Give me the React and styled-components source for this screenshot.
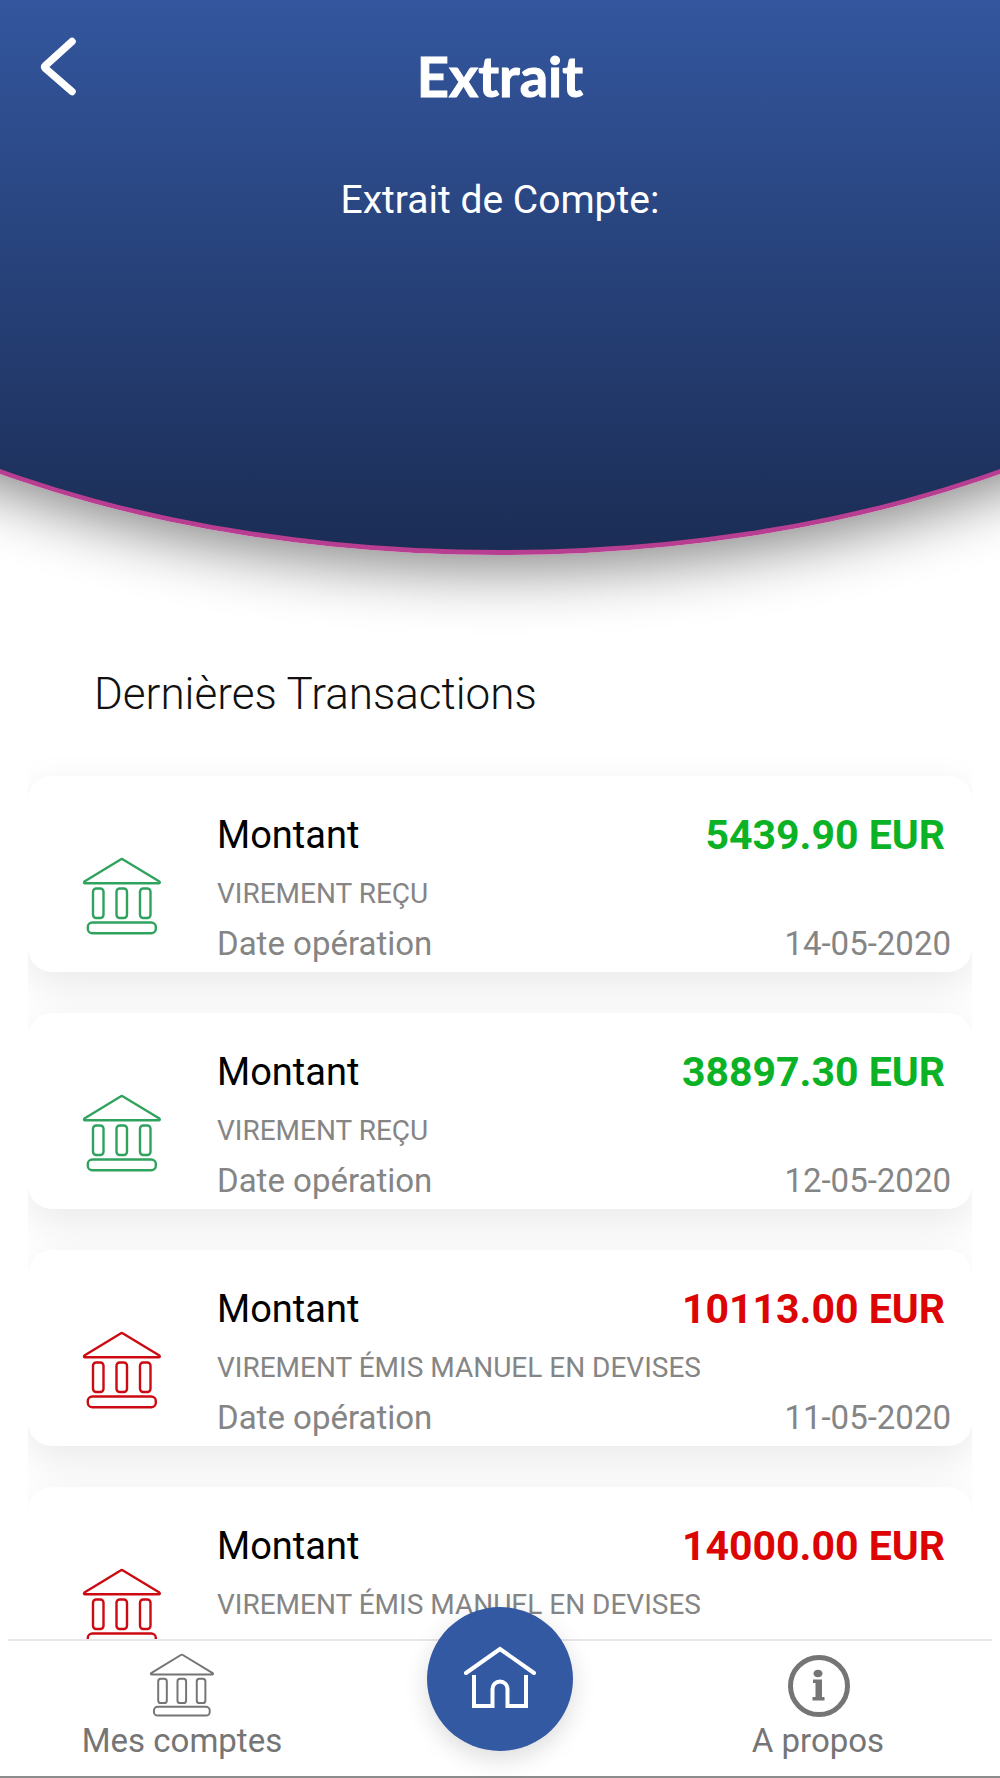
import styled, { createGlobalStyle } from "styled-components";

const transactions = [
	{ id: 1, amount: "5439.90 EUR", label: "VIREMENT REÇU", date: "14-05-2020", credit: true },
	{ id: 2, amount: "38897.30 EUR", label: "VIREMENT REÇU", date: "12-05-2020", credit: true },
	{ id: 3, amount: "10113.00 EUR", label: "VIREMENT ÉMIS MANUEL EN DEVISES", date: "11-05-2020", credit: false },
	{ id: 4, amount: "14000.00 EUR", label: "VIREMENT ÉMIS MANUEL EN DEVISES", date: "11-05-2020", credit: false },
];

const GlobalStyle = createGlobalStyle`
	* {
		box-sizing: border-box;
	}
	body {
		margin: 0;
		background: #fff;
		font-family: Roboto, "Liberation Sans", sans-serif;
	}
	h1, h2, p, ul {
		margin: 0;
		padding: 0;
	}
`;

const Screen = styled.div`
	display: flex;
	flex-direction: column;
	height: 100vh;
	border-bottom: 2px solid #8c8c8c;
`;
const Content = styled.main`
	flex: 1;
	min-height: 0;
	overflow-x: hidden;
	overflow-y: auto;
	scrollbar-width: none;
`;

/* wider than the screen so that only the flat part of the curve shows */
const Header = styled.header`
	margin: 0 calc(-36% - 5px);
	padding: 36px 36% 328px;
	border: 5px solid #b83e91;
	border-top: none;
	border-radius: 0 0 50% 50% / 0 0 440px 440px;
	background: linear-gradient(#33569e, #1b2d55);
	box-shadow: 0 14px 60px rgba(0, 0, 0, 0.48);
	color: #fff;
	text-align: center;
`;
const TitleBar = styled.div`
	display: grid;
	grid-template-columns: 80px 1fr 80px;
	align-items: start;
	padding: 0 18px;
	margin-bottom: 62px;
`;
const BackButton = styled.button`
	display: flex;
	justify-content: center;
	padding: 0;
	border: none;
	background: none;
	color: inherit;
	cursor: pointer;
`;
const Title = styled.h1`
	font-family: Lato, sans-serif;
	font-size: 56px;
	font-weight: 700;
	line-height: 80px;
	-webkit-text-stroke: 1px currentColor;
`;
const Subtitle = styled.p`
	font-size: 39px;
	line-height: 44px;
`;

const SectionTitle = styled.h2`
	margin: 113px 0 37px;
	padding: 0 94px;
	font-size: 44px;
	font-weight: 300;
	line-height: 52px;
	color: #111;
`;
const List = styled.ul`
	display: flex;
	flex-direction: column;
	gap: 41px;
	margin: 0 28px;
	padding: 19px 0 41px;
	overflow: hidden;
	list-style: none;
`;
const Card = styled.li`
	display: flex;
	border-radius: 24px;
	background: #fff;
	box-shadow: 0 14px 44px rgba(0, 0, 0, 0.09);
`;
const CardIcon = styled.div`
	flex: none;
	width: 189px;
	padding: 81px 0 0 54px;
	color: ${(props) => (props.$credit ? "#2fa35e" : "#cc0a12")};
`;
const Details = styled.div`
	flex: 1;
	padding: 37px 21px 8px 0;
	color: #858585;
`;
const Row = styled.div`
	display: flex;
	justify-content: space-between;
	font-size: 33px;
	line-height: 40px;
`;
const AmountRow = styled(Row)`
	padding-right: 6px;
	font-size: 38px;
	line-height: 44px;
	color: #000;
`;
const Amount = styled.strong`
	font-size: 41px;
	font-weight: 700;
	color: ${(props) => (props.$credit ? "#0cb226" : "#dd0404")};
`;
const Label = styled.p`
	margin: 21px 0 14px;
	font-size: 28px;
	line-height: 32px;
`;

const Nav = styled.nav`
	position: relative;
	z-index: 1;
	display: grid;
	grid-template-columns: repeat(3, 1fr);
	justify-items: center;
	align-items: start;
	margin: 0 8px;
	padding: 0 15px 15px;
	border-top: 2px solid #e8e8e8;
	background: #fff;
`;
const NavLink = styled.a`
	display: flex;
	flex-direction: column;
	align-items: center;
	gap: 4px;
	padding-top: 12px;
	font-size: 33px;
	line-height: 40px;
	color: #757575;
	text-decoration: none;
`;
const HomeLink = styled.a`
	display: flex;
	align-items: center;
	justify-content: center;
	width: 146px;
	height: 144px;
	margin-top: -34px;
	margin-bottom: -34px;
	border-radius: 50%;
	background: #3459a3;
	box-shadow: 0 8px 24px rgba(0, 0, 0, 0.14);
	color: #fff;
`;

function BankIcon({ width = 80, height = 78 }) {
	return (
		<svg width={width} height={height} viewBox="0 0 80 78" fill="none" stroke="currentColor" strokeWidth="2.4" strokeLinejoin="round" aria-hidden="true">
			<path d="M38.6 2.4Q39.8 1.6 41 2.4L77.4 24.6Q78.4 26 77 26.2H2.8Q1.4 26 2.4 24.6Z" />
			<rect x="11" y="31.5" width="10.5" height="29.5" rx="3.2" />
			<rect x="34.5" y="31.5" width="10.5" height="29.5" rx="3.2" />
			<rect x="58" y="31.5" width="10.5" height="29.5" rx="3.2" />
			<rect x="5.8" y="65.5" width="68" height="10.8" rx="4.5" />
		</svg>
	);
}

function BackIcon() {
	return (
		<svg width="40" height="62" viewBox="0 0 40 62" fill="none" stroke="currentColor" strokeWidth="7.5" strokeLinejoin="round" strokeLinecap="round" aria-hidden="true">
			<path d="M34 5.5 7.5 29.5Q6 31 7.5 32.5L34 55.5" />
		</svg>
	);
}

function HomeIcon() {
	return (
		<svg width="74" height="66" viewBox="0 0 74 66" fill="none" stroke="currentColor" strokeWidth="4" strokeLinecap="round" aria-hidden="true">
			<path d="M3 27 37 3 71 27" />
			<path d="M11 29V60H29.5V43A7.5 7.5 0 0 1 44.5 43V60H63V29" strokeLinecap="butt" />
		</svg>
	);
}

function InfoIcon() {
	return (
		<svg width="64" height="64" viewBox="0 0 64 64" fill="currentColor" aria-hidden="true">
			<circle cx="33" cy="33" r="28.5" fill="none" stroke="currentColor" strokeWidth="5" />
			<ellipse cx="32" cy="20.5" rx="4.5" ry="3.8" />
			<path d="M27 26.500H36V44H38.500V47.500H26.500V44H29.500V30H27Z" />
		</svg>
	);
}

function Transaction({ item }) {
	return (
		<Card>
			<CardIcon $credit={item.credit}>
				<BankIcon />
			</CardIcon>
			<Details>
				<AmountRow>
					<span>Montant</span>
					<Amount $credit={item.credit}>{item.amount}</Amount>
				</AmountRow>
				<Label>{item.label}</Label>
				<Row>
					<span>Date opération</span>
					<time>{item.date}</time>
				</Row>
			</Details>
		</Card>
	);
}

export default function App() {
	return (
		<Screen>
			<GlobalStyle />
			<Content>
				<Header>
					<TitleBar>
						<BackButton type="button" aria-label="Retour">
							<BackIcon />
						</BackButton>
						<Title>Extrait</Title>
					</TitleBar>
					<Subtitle>Extrait de Compte:</Subtitle>
				</Header>
				<SectionTitle>Dernières Transactions</SectionTitle>
				<List>
					{transactions.map((item) => (
						<Transaction key={item.id} item={item} />
					))}
				</List>
			</Content>
			<Nav>
				<NavLink href="#comptes">
					<BankIcon width={66} height={64} />
					Mes comptes
				</NavLink>
				<HomeLink href="#accueil" aria-label="Accueil">
					<HomeIcon />
				</HomeLink>
				<NavLink href="#apropos">
					<InfoIcon />
					A propos
				</NavLink>
			</Nav>
		</Screen>
	);
}
